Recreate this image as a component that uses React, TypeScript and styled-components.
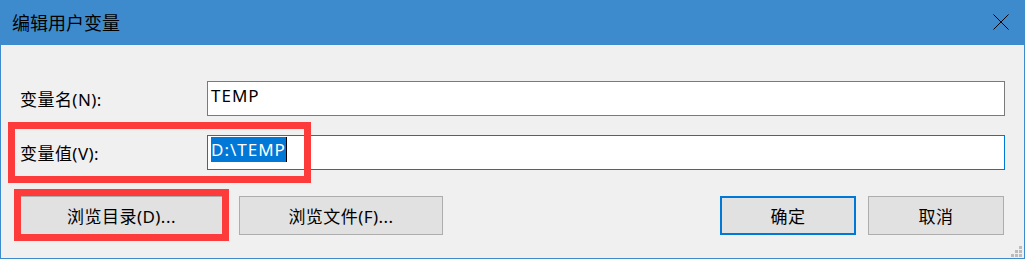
import React from "react";
import styled, { createGlobalStyle } from "styled-components";

const GlobalStyle = createGlobalStyle`
  html, body {
    margin: 0;
    padding: 0;
    background: #f0f0f0;
  }
  * {
    box-sizing: border-box;
  }
`;

const uiFont = `"Noto Sans", "Noto Sans CJK SC", sans-serif`;

const Window = styled.div`
  position: relative;
  width: 1025px;
  height: 259px;
  border: 1px solid #3d8bcd;
  border-top: none;
  background: #f0f0f0;
  display: flex;
  flex-direction: column;
  font-family: ${uiFont};
  color: #000;
`;

const TitleBar = styled.div`
  height: 45px;
  margin: 0 -1px;
  padding: 0 12px;
  background: #3d8bcd;
  display: flex;
  align-items: center;
  justify-content: space-between;
`;

const Title = styled.span`
  font-size: 18px;
  font-family: "Noto Sans CJK SC", sans-serif;
  padding-bottom: 1px;
`;

const CloseButton = styled.button`
  width: 46px;
  height: 45px;
  margin-right: -12px;
  padding: 0 0 1px 0;
  border: none;
  background: transparent;
  display: flex;
  align-items: center;
  justify-content: center;
  svg {
    margin-right: 2px;
  }
`;

const Body = styled.div`
  flex: 1;
  padding: 36px 19px 0 19px;
  display: flex;
  flex-direction: column;
`;

const FieldGrid = styled.div`
  display: grid;
  grid-template-columns: 187px 1fr;
  grid-auto-rows: 35px;
  row-gap: 19px;
  align-items: center;
`;

const Label = styled.label`
  font-size: 17px;
  line-height: 23px;
  letter-spacing: 0.45px;
  padding-top: 1px;
`;

const Field = styled.div<{ $focused?: boolean }>`
  height: 35px;
  background: #fff;
  border: 1px solid ${(p) => (p.$focused ? "#0078d7" : "#7a7a7a")};
  padding: 1px 3px 0 3px;
  font-size: 17px;
  line-height: 25px;
  letter-spacing: 1px;
  white-space: nowrap;
  display: flex;
  align-items: flex-start;
`;

const Selection = styled.span`
  background: #0078d7;
  color: #fff;
  line-height: 25px;
`;

const Caret = styled.span`
  width: 1px;
  height: 25px;
  background: #000;
`;

const ButtonRow = styled.div`
  margin-top: 26px;
  display: flex;
  align-items: center;
  padding-right: 1px;
`;

const Group = styled.div<{ $gap: number }>`
  display: flex;
  gap: ${(p) => p.$gap}px;
`;

const Spacer = styled.div`
  flex: 1;
`;

const Button = styled.button<{ $width: number; $default?: boolean }>`
  width: ${(p) => p.$width}px;
  height: 39px;
  background: #e1e1e1;
  border: ${(p) => (p.$default ? "2px solid #0078d7" : "1px solid #adadad")};
  font-family: ${uiFont};
  font-size: 17px;
  letter-spacing: 0.45px;
  color: #000;
  padding: 0 0 1px 0;
  display: flex;
  align-items: center;
  justify-content: center;
`;

const Highlight = styled.div<{ $left: number; $top: number; $w: number; $h: number }>`
  position: absolute;
  left: ${(p) => p.$left}px;
  top: ${(p) => p.$top}px;
  width: ${(p) => p.$w}px;
  height: ${(p) => p.$h}px;
  border: 7px solid #fd3b3b;
  pointer-events: none;
`;

const SizeGrip = styled.svg`
  position: absolute;
  right: 2px;
  bottom: 1px;
`;

const CloseIcon = () => (
  <svg width="16" height="16" viewBox="0 0 16 16">
    <path d="M0.5 0.5 L15.5 15.5 M15.5 0.5 L0.5 15.5" stroke="#000" strokeWidth="1" fill="none" />
  </svg>
);

const Grip = () => {
  const dots = [
    [8, 0],
    [4, 4],
    [8, 4],
    [0, 8],
    [4, 8],
    [8, 8],
  ];
  return (
    <SizeGrip width="11" height="11" viewBox="0 0 11 11">
      {dots.map(([x, y]) => (
        <rect key={`${x}-${y}`} x={x} y={y} width="3" height="3" fill="#bcbcbc" />
      ))}
    </SizeGrip>
  );
};

const App = () => {
  return (
    <>
      <GlobalStyle />
      <Window>
        <TitleBar>
          <Title>编辑用户变量</Title>
          <CloseButton aria-label="关闭">
            <CloseIcon />
          </CloseButton>
        </TitleBar>
        <Body>
          <FieldGrid>
            <Label>变量名(N):</Label>
            <Field>TEMP</Field>
            <Label>变量值(V):</Label>
            <Field $focused>
              <Selection>D:\TEMP</Selection>
              <Caret />
            </Field>
          </FieldGrid>
          <ButtonRow>
            <Group $gap={16}>
              <Button $width={203}>浏览目录(D)...</Button>
              <Button $width={204}>浏览文件(F)...</Button>
            </Group>
            <Spacer />
            <Group $gap={12}>
              <Button $width={136} $default>确定</Button>
              <Button $width={136}>取消</Button>
            </Group>
          </ButtonRow>
        </Body>
        <Highlight $left={7} $top={122} $w={303} $h={61} />
        <Highlight $left={13} $top={189} $w={215} $h={52} />
        <Grip />
      </Window>
    </>
  );
};

export default App;
